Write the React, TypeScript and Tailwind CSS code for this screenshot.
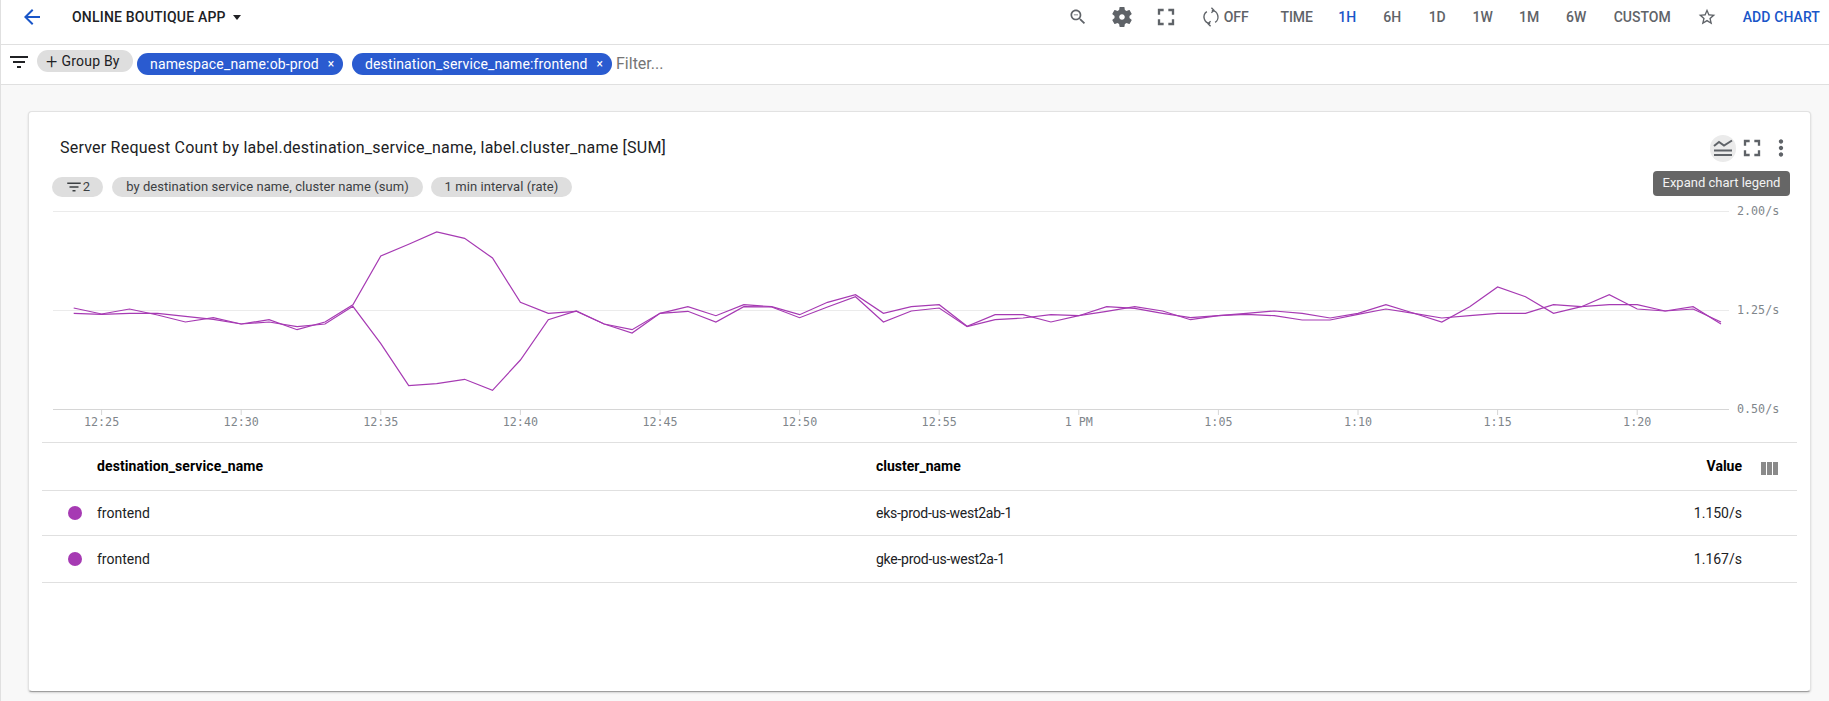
import React from "react";

const A = [321,339,324,342,363,350,369,356,386,363,311,165,130,93,112,171,304,337,331,369,386,337,317,344,311,317,341,304,281,337,317,311,376,341,341,363,344,317,322,337,350,344,337,330,337,351,337,311,337,363,317,258,287,337,317,281,324,330,317,369];
const B = [337,340,337,337,346,355,369,363,377,369,316,428,554,548,535,568,477,356,330,369,396,337,331,363,317,318,350,318,287,363,330,321,377,356,351,341,344,331,317,330,356,344,340,344,357,357,340,324,337,351,344,337,337,311,317,311,311,330,324,363];

const toPts = (arr: number[]) =>
  arr.map((v, i) => `${(73.7 + i * 27.92 - 29).toFixed(1)},${(200 + v / 3 - 204).toFixed(1)}`).join(" ");

const ticks: [number, string][] = [
  [0, "12:25"], [1, "12:30"], [2, "12:35"], [3, "12:40"], [4, "12:45"], [5, "12:50"], [6, "12:55"],
  [7, "1 PM"], [8, "1:05"], [9, "1:10"], [10, "1:15"], [11, "1:20"],
];

const Ic = ({ d, className }: { d: string; className: string }) => (
  <svg viewBox="0 0 24 24" className={className} fill="currentColor"><path d={d} /></svg>
);

const P = {
  back: "M20 11H7.83l5.59-5.59L12 4l-8 8 8 8 1.41-1.41L7.83 13H20v-2z",
  search: "M15.5 14h-.79l-.28-.27C15.41 12.59 16 11.11 16 9.5 16 5.91 13.09 3 9.5 3S3 5.91 3 9.5 5.91 16 9.5 16c1.61 0 3.09-.59 4.23-1.57l.27.28v.79l5 4.99L20.49 19l-4.99-5zm-6 0C7.01 14 5 11.99 5 9.5S7.01 5 9.5 5 14 7.01 14 9.5 11.99 14 9.5 14zM7 9h5v1H7z",
  gear: "M19.43 12.98c.04-.32.07-.64.07-.98s-.03-.66-.07-.98l2.11-1.65c.19-.15.24-.42.12-.64l-2-3.46c-.12-.22-.39-.3-.61-.22l-2.49 1c-.52-.4-1.08-.73-1.69-.98l-.38-2.65C14.46 2.18 14.25 2 14 2h-4c-.25 0-.46.18-.49.42l-.38 2.65c-.61.25-1.17.59-1.69.98l-2.49-1c-.23-.09-.49 0-.61.22l-2 3.46c-.13.22-.07.49.12.64l2.11 1.65c-.04.32-.07.65-.07.98s.03.66.07.98l-2.11 1.65c-.19.15-.24.42-.12.64l2 3.46c.12.22.39.3.61.22l2.49-1c.52.4 1.08.73 1.69.98l.38 2.65c.03.24.24.42.49.42h4c.25 0 .46-.18.49-.42l.38-2.65c.61-.25 1.17-.59 1.69-.98l2.49 1c.23.09.49 0 .61-.22l2-3.46c.12-.22.07-.49-.12-.64l-2.11-1.65zM12 14.800c-1.55 0-2.800-1.25-2.800-2.800s1.25-2.800 2.800-2.800 2.800 1.25 2.800 2.800-1.25 2.800-2.800 2.800z",
  full: "M7 14H5v5h5v-2H7v-3zm-2-4h2V7h3V5H5v5zm12 7h-3v2h5v-5h-2v3zM14 5v2h3v3h2V5h-5z",
  star: "M22 9.24l-7.19-.62L12 2 9.19 8.63 2 9.24l5.46 4.73L5.82 21 12 17.27 18.18 21l-1.63-7.03L22 9.24zM12 15.4l-3.76 2.27 1-4.28-3.32-2.88 4.38-.38L12 6.1l1.71 4.04 4.38.38-3.32 2.88 1 4.28L12 15.4z",
  filter: "M10 18h4v-2h-4v2zM3 6v2h18V6H3zm3 7h12v-2H6v2z",
  more: "M12 8c1.1 0 2-.9 2-2s-.9-2-2-2-2 .9-2 2 .9 2 2 2zm0 2c-1.1 0-2 .9-2 2s.9 2 2 2 2-.9 2-2-.9-2-2-2zm0 6c-1.1 0-2 .9-2 2s.9 2 2 2 2-.9 2-2-.9-2-2-2z",
  cols: "M10 18h5V5h-5v13zm-6 0h5V5H4v13zM16 5v13h5V5h-5z",
};

const ranges = [
  { t: "TIME", w: "w-[56px]" },
  { t: "1H", w: "w-[45px]", on: true },
  { t: "6H", w: "w-[45px]" },
  { t: "1D", w: "w-[45px]" },
  { t: "1W", w: "w-[46px]" },
  { t: "1M", w: "w-[47px]" },
  { t: "6W", w: "w-[47px]" },
  { t: "CUSTOM", w: "w-[85px]" },
];

export default function App() {
  return (
    <div className="w-[1829px] h-[701px] overflow-hidden flex flex-col bg-white border-l border-[#e0e0e0] text-[#202124] font-['Roboto',sans-serif]">
      <header className="h-[45px] shrink-0 border-b border-[#e0e0e0] flex items-center pb-[10px]">
        <Ic d={P.back} className="w-6 h-6 ml-[19px] text-[#1a56c8]" />
        <span className="ml-[28px] text-[14px] font-medium tracking-[0.2px] text-[#202124]">ONLINE BOUTIQUE APP</span>
        <span className="ml-[7px] w-0 h-0 border-x-[4.5px] border-x-transparent border-t-[5px] border-t-[#202124]" />
        <div className="ml-auto flex items-center text-[#5f6368]">
          <Ic d={P.search} className="w-[20px] h-[20px]" />
          <Ic d={P.gear} className="w-[24px] h-[24px] ml-[22px]" />
          <Ic d={P.full} className="w-[28px] h-[28px] ml-[18px]" />
          <svg viewBox="0 0 24 24" className="w-[20px] h-[20px] ml-[21px]" fill="none" stroke="currentColor" strokeWidth="1.6">
            <path d="M7 5.500A8 8 0 0 0 11 20" />
            <path d="M17 18.500A8 8 0 0 0 13 4" />
            <path d="M12.500 1L15.500 4l-3 3" />
            <path d="M11.500 17L8.500 20l3 3" />
          </svg>
          <span className="ml-[3px] text-[14px] font-medium w-[24px]">OFF</span>
          <div className="ml-[21px] flex items-center text-[14px] font-medium">
            {ranges.map((r) => (
              <span key={r.t} className={`${r.w} text-center ${r.on ? "text-[#1a56c8]" : ""}`}>{r.t}</span>
            ))}
          </div>
          <Ic d={P.star} className="w-[20px] h-[20px] ml-[12px]" />
          <span className="ml-[26px] mr-[9px] text-[14px] font-medium tracking-[0.1px] text-[#1a56c8]">ADD CHART</span>
        </div>
      </header>

      <div className="h-[40px] shrink-0 border-b border-[#e0e0e0] flex items-center">
        <Ic d={P.filter} className="w-6 h-6 ml-[6px] -mt-[6px] text-[#202124]" />
        <span className="ml-[6px] -mt-[7px] h-[22px] w-[96px] rounded-full bg-[#dedede] flex items-center pl-[9px] text-[14px] tracking-[0.2px] text-[#202124]">
          <span className="text-[20px] leading-none mr-[4px] font-light">+</span>Group By
        </span>
        <span className="ml-[4px] -mt-[1px] h-[22px] w-[206px] rounded-full bg-[#2a5bd0] flex items-center pl-[13px] text-[14px] tracking-[0.16px] text-white">
          namespace_name:ob-prod<span className="ml-[9px] text-[12px]">×</span>
        </span>
        <span className="ml-[9px] -mt-[1px] h-[22px] w-[260px] rounded-full bg-[#2a5bd0] flex items-center pl-[13px] text-[14px] tracking-[0.14px] text-white">
          destination_service_name:frontend<span className="ml-[9px] text-[12px]">×</span>
        </span>
        <span className="ml-[4px] -mt-[1px] text-[16px] text-[#757575]">Filter...</span>
      </div>

      <main className="flex-1 bg-[#f8f8f8] pt-[26px] pb-[9px] pl-[27px] pr-[18px] flex">
        <section className="relative flex-1 flex flex-col bg-white rounded-[4px] border border-[#e2e2e2] border-b-[#9e9e9e] shadow-[0_1px_2px_rgba(0,0,0,0.15)]">
          <div className="h-[65px] shrink-0 flex items-start pt-[26px] pl-[31px]">
            <span className="text-[16px] leading-[20px] tracking-[0.22px] text-[#202124]">
              Server Request Count by label.destination_service_name, label.cluster_name [SUM]
            </span>
            <div className="ml-auto mr-[16px] -mt-[4px] flex items-center text-[#5f6368]">
              <span className="w-[26px] h-[27px] rounded-full bg-[#ebebeb] flex items-center justify-center">
                <svg viewBox="0 0 24 24" className="w-[24px] h-[24px]" fill="none" stroke="currentColor">
                  <path d="M3 10l5-4 5 3.500 8-5" strokeWidth="2" />
                  <path d="M3 14.500h18M3 19h18" strokeWidth="2.200" />
                </svg>
              </span>
              <Ic d={P.full} className="w-[28px] h-[28px] ml-[2px]" />
              <Ic d={P.more} className="w-[26px] h-[26px] ml-[2px]" />
            </div>
          </div>

          <div className="h-[28px] shrink-0 flex items-start pl-[23px] gap-[8px] text-[13px] tracking-[0.06px] text-[#3c4043]">
            <span className="h-[20px] w-[51px] rounded-full bg-[#dedede] flex items-center justify-center mr-[1px]">
              <Ic d={P.filter} className="w-[18px] h-[18px]" />2
            </span>
            <span className="h-[20px] w-[311px] rounded-full bg-[#dedede] flex items-center justify-center">
              by destination service name, cluster name (sum)
            </span>
            <span className="h-[20px] w-[141px] rounded-full bg-[#dedede] flex items-center justify-center">
              1 min interval (rate)
            </span>
          </div>

          <svg width="1781" height="237" className="shrink-0 block">
            <line x1="24" x2="1700" y1="6.500" y2="6.500" stroke="#ebebeb" />
            <line x1="24" x2="1700" y1="105.500" y2="105.500" stroke="#ebebeb" />
            <line x1="24" x2="1700" y1="204.500" y2="204.500" stroke="#d6d6d6" />
            {ticks.map(([i, t]) => (
              <g key={t}>
                <line x1={72.6 + i * 139.6} x2={72.6 + i * 139.6} y1="204" y2="210" stroke="#d6d6d6" />
                <text x={72.6 + i * 139.6} y="221" textAnchor="middle" fontSize="11.700" fill="#80868b" fontFamily="'DejaVu Sans Mono', monospace">{t}</text>
              </g>
            ))}
            {[["2.00/s", 10], ["1.25/s", 109], ["0.50/s", 208]].map(([t, y]) => (
              <text key={t as string} x="1708" y={y as number} fontSize="11.700" fill="#80868b" fontFamily="'DejaVu Sans Mono', monospace">{t}</text>
            ))}
            <polyline points={toPts(B)} fill="none" stroke="#a63ab3" strokeWidth="1.2" />
            <polyline points={toPts(A)} fill="none" stroke="#a63ab3" strokeWidth="1.2" />
          </svg>

          <div className="mx-[13px] text-[14px] text-[#202124]">
            <div className="h-[49px] grid grid-cols-[55px_779px_1fr_55px] items-center border-y border-[#e0e0e0] font-bold text-black">
              <span />
              <span className="tracking-[0.1px]">destination_service_name</span>
              <span className="flex">cluster_name<span className="ml-auto">Value</span></span>
              <span className="flex pl-[17px] pt-[5px]"><Ic d={P.cols} className="w-[24px] h-[24px] text-[#8a8a8a] -ml-[2px]" /></span>
            </div>
            {[["eks-prod-us-west2ab-1", "1.150/s", "h-[45px]"], ["gke-prod-us-west2a-1", "1.167/s", "h-[47px]"]].map(([c, v, h]) => (
              <div key={c} className={`${h} grid grid-cols-[55px_779px_1fr_55px] items-center border-b border-[#e0e0e0]`}>
                <span className="w-[14px] h-[14px] rounded-full bg-[#a63ab3] ml-[26px]" />
                <span>frontend</span>
                <span className="flex items-center"><span className="tracking-[-0.26px]">{c}</span><span className="ml-auto">{v}</span></span>
                <span />
              </div>
            ))}
          </div>

          <div className="absolute right-[20px] top-[59px] h-[25px] w-[137px] rounded-[4px] bg-[#666666] text-[13px] text-[#f2f2f2] flex items-center justify-center pb-[2px]">
            Expand chart legend
          </div>
        </section>
      </main>
    </div>
  );
}
